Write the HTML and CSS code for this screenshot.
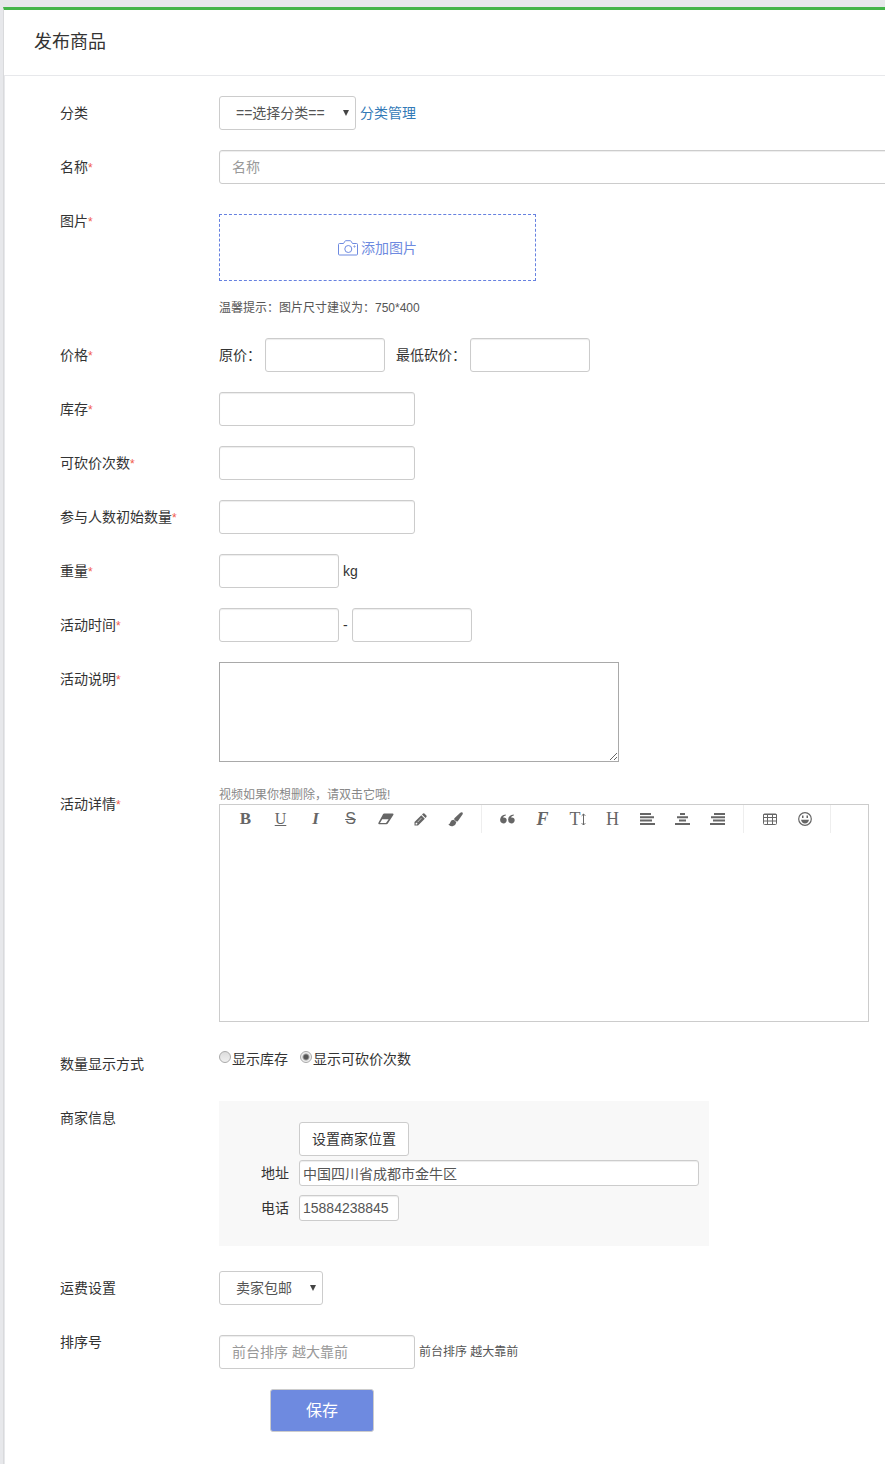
FILE: index.html
```html
<!DOCTYPE html>
<html lang="zh-CN">
<head>
    <meta charset="UTF-8">
    <meta name="viewport" content="width=device-width, initial-scale=1.0">
    <title>发布商品</title>
    <link rel="stylesheet" href="styles.css">
</head>
<body>
    <main class="panel">
        <h1 class="panel-heading">发布商品</h1>
        <form class="panel-body">
            <div class="form-row">
                <label class="row-label" for="category">分类</label>
                <div class="controls inline">
                    <span class="select-wrap">
                        <select id="category" class="select-category">
                            <option>==选择分类==</option>
                        </select>
                    </span>
                    <a class="link" href="#">分类管理</a>
                </div>
            </div>

            <div class="form-row">
                <label class="row-label" for="name">名称<i class="required">*</i></label>
                <div class="controls">
                    <input type="text" id="name" class="input input-wide" placeholder="名称">
                </div>
            </div>

            <div class="form-row">
                <span class="row-label">图片<i class="required">*</i></span>
                <div class="controls upload">
                    <button type="button" class="upload-btn">
                        <svg width="20" height="16" viewBox="0 0 20 16" fill="none" stroke="currentColor">
                            <path d="M1.5 3.5H5.5L7 1.2Q7.2 .7 7.8 .7H12.2Q12.8 .7 13 1.2L14.5 3.5H18.5Q19.5 3.5 19.5 4.5V14Q19.5 15 18.5 15H1.5Q.5 15 .5 14V4.5Q.5 3.5 1.5 3.5Z"/>
                            <circle cx="10.3" cy="9" r="3.5"/>
                            <circle cx="16.5" cy="6.5" r=".6"/>
                        </svg>
                        添加图片
                    </button>
                    <p class="tip">温馨提示：图片尺寸建议为：750*400</p>
                </div>
            </div>

            <div class="form-row">
                <span class="row-label">价格<i class="required">*</i></span>
                <div class="controls inline">
                    <label for="price">原价：</label>
                    <input type="text" id="price" class="input input-sm">
                    <label class="second" for="min-price">最低砍价：</label>
                    <input type="text" id="min-price" class="input input-sm">
                </div>
            </div>

            <div class="form-row">
                <label class="row-label" for="stock">库存<i class="required">*</i></label>
                <div class="controls">
                    <input type="text" id="stock" class="input">
                </div>
            </div>

            <div class="form-row">
                <label class="row-label" for="bargain-times">可砍价次数<i class="required">*</i></label>
                <div class="controls">
                    <input type="text" id="bargain-times" class="input">
                </div>
            </div>

            <div class="form-row">
                <label class="row-label" for="join-count">参与人数初始数量<i class="required">*</i></label>
                <div class="controls">
                    <input type="text" id="join-count" class="input">
                </div>
            </div>

            <div class="form-row">
                <label class="row-label" for="weight">重量<i class="required">*</i></label>
                <div class="controls inline">
                    <input type="text" id="weight" class="input input-sm">
                    <span>kg</span>
                </div>
            </div>

            <div class="form-row">
                <label class="row-label" for="start-time">活动时间<i class="required">*</i></label>
                <div class="controls inline">
                    <input type="text" id="start-time" class="input input-sm">
                    <span>-</span>
                    <input type="text" id="end-time" class="input input-sm" aria-label="结束时间">
                </div>
            </div>

            <div class="form-row form-row-tall">
                <label class="row-label" for="description">活动说明<i class="required">*</i></label>
                <div class="controls">
                    <textarea id="description" class="textarea"></textarea>
                </div>
            </div>

            <div class="form-row form-row-tall">
                <span class="row-label">活动详情<i class="required">*</i></span>
                <div class="controls">
                    <p class="editor-tip">视频如果你想删除，请双击它哦!</p>
                    <div class="editor">
                        <div class="toolbar">
                            <div class="tool-group">
                                <button type="button" class="tool bold">B</button>
                                <button type="button" class="tool underline">U</button>
                                <button type="button" class="tool italic">I</button>
                                <button type="button" class="tool strike">S</button>
                                <button type="button" class="tool" aria-label="清除格式">
                                    <svg width="16" height="12" viewBox="0 0 16 12">
                                        <path d="M6.2 .5H14.6Q16 .7 15.3 2L9.8 10.5Q9.3 11.3 8.4 11.3H1.2Q-.2 11 .6 9.6L5 1.3Q5.4 .5 6.2 .5ZM2 10H8L10.6 6.3H4.2Z" fill="currentColor" fill-rule="evenodd"/>
                                    </svg>
                                </button>
                                <button type="button" class="tool" aria-label="文字颜色">
                                    <svg width="13" height="13" viewBox="0 0 13 13" fill="currentColor">
                                        <path d="M.5 12.5V9L7.3 2.2L10.8 5.7L4 12.5ZM1.6 10.2V11.4H2.8L3.6 10.7L2.3 9.4ZM3.4 8.9L3.8 9.3L7.6 5.3L7.2 4.9Z" fill-rule="evenodd"/>
                                        <path d="M8 1.5L9 .6Q9.7 0 10.4 .6L12.4 2.6Q13 3.3 12.4 4L11.5 5Z"/>
                                    </svg>
                                </button>
                                <button type="button" class="tool" aria-label="背景颜色">
                                    <svg width="15" height="15" viewBox="0 0 15 15" fill="currentColor">
                                        <path d="M14.5 .6Q15.2 1.4 14.3 2.8L9.8 9.2Q8.7 10 7.5 8.8Q5.6 7.6 6.4 6.3L12 .9Q13.7-.3 14.5 .6Z"/>
                                        <path d="M5.3 7.8Q7.6 8.4 8.3 10.4Q7.8 13.3 4.6 14.2Q2 14.8 .3 12.1Q2 12.3 2.2 10.5Q2.9 7.8 5.3 7.8Z"/>
                                    </svg>
                                </button>
                            </div>
                            <div class="tool-group">
                                <button type="button" class="tool" aria-label="引用">
                                    <svg width="15" height="10" viewBox="0 0 15 10" fill="currentColor">
                                        <path id="quote" d="M5.8 .5V1.6Q3.3 2 3 3.6Q6.6 3.2 6.7 6.3Q6.5 9.4 3.4 9.5Q.1 9.3 .1 5.6Q.4 1.2 5.8 .5Z"/>
                                        <use href="#quote" x="8"/>
                                    </svg>
                                </button>
                                <button type="button" class="tool font">F</button>
                                <button type="button" class="tool size">T<svg width="5" height="13" viewBox="0 0 5 13" fill="none" stroke="currentColor"><path d="M2.5 1V12M.7 2.8L2.5 1L4.3 2.8M.7 10.2L2.5 12L4.3 10.2"/></svg></button>
                                <button type="button" class="tool">H</button>
                                <button type="button" class="tool" aria-label="左对齐">
                                    <svg width="15" height="12" viewBox="0 0 15 12" stroke="currentColor" stroke-width="2">
                                        <path d="M0 1H11M0 4.3H14M0 7.6H12M0 11H15"/>
                                    </svg>
                                </button>
                                <button type="button" class="tool" aria-label="居中">
                                    <svg width="15" height="12" viewBox="0 0 15 12" stroke="currentColor" stroke-width="2">
                                        <path d="M5 1H10M2 4.3H13M4 7.6H11M0 11H15"/>
                                    </svg>
                                </button>
                                <button type="button" class="tool" aria-label="右对齐">
                                    <svg width="15" height="12" viewBox="0 0 15 12" stroke="currentColor" stroke-width="2">
                                        <path d="M4 1H15M1 4.3H15M3 7.6H15M0 11H15"/>
                                    </svg>
                                </button>
                            </div>
                            <div class="tool-group">
                                <button type="button" class="tool" aria-label="表格">
                                    <svg width="14" height="12" viewBox="0 0 14 12" fill="none" stroke="currentColor">
                                        <rect x=".5" y="1" width="13" height="10.5" rx="1"/>
                                        <path d="M.5 1.5H13.5M.5 4.5H13.5M.5 8H13.5M4.5 1V11.5M9.5 1V11.5"/>
                                    </svg>
                                </button>
                                <button type="button" class="tool" aria-label="表情">
                                    <svg width="14" height="14" viewBox="0 0 14 14">
                                        <circle cx="7" cy="7" r="6.3" fill="none" stroke="currentColor" stroke-width="1.2"/>
                                        <path d="M3 7.8H11Q10.3 11.4 7 11.4Q3.7 11.4 3 7.8ZM4 3.6H5.5V6H4ZM8.5 3.6H10V6H8.5Z" fill="currentColor"/>
                                    </svg>
                                </button>
                            </div>
                        </div>
                        <div class="editor-content" contenteditable="true"></div>
                    </div>
                </div>
            </div>

            <div class="form-row">
                <span class="row-label">数量显示方式</span>
                <div class="controls radios">
                    <label class="radio"><input type="radio" name="show">显示库存</label>
                    <label class="radio"><input type="radio" name="show" checked>显示可砍价次数</label>
                </div>
            </div>

            <div class="form-row form-row-tall">
                <span class="row-label">商家信息</span>
                <div class="controls">
                    <div class="merchant">
                        <button type="button" class="btn">设置商家位置</button>
                        <div class="merchant-row">
                            <label for="address">地址</label>
                            <input type="text" id="address" class="input input-slim" value="中国四川省成都市金牛区">
                        </div>
                        <div class="merchant-row">
                            <label for="phone">电话</label>
                            <input type="text" id="phone" class="input input-slim input-phone" value="15884238845">
                        </div>
                    </div>
                </div>
            </div>

            <div class="form-row">
                <label class="row-label" for="freight">运费设置</label>
                <div class="controls">
                    <span class="select-wrap">
                        <select id="freight" class="select-freight">
                            <option>卖家包邮</option>
                        </select>
                    </span>
                </div>
            </div>

            <div class="form-row">
                <label class="row-label" for="sort">排序号</label>
                <div class="controls inline sort">
                    <input type="text" id="sort" class="input" placeholder="前台排序 越大靠前">
                    <span class="note">前台排序 越大靠前</span>
                </div>
            </div>

            <button type="submit" class="btn-save">保存</button>
        </form>
    </main>
</body>
</html>
```

FILE: styles.css
```css
* {
    box-sizing: border-box;
}
body {
    margin: 0;
    padding: 7px 0 0 3px;
    min-height: 100vh;
    display: flex;
    flex-direction: column;
    background-color: #e7e8eb;
    color: #333;
    font: 14px/20px "Liberation Sans", "Noto Sans CJK SC", sans-serif;
}
button, input, select, textarea {
    font: inherit;
    color: inherit;
}
p {
    margin: 0;
}
.panel {
    flex: 1;
    display: flex;
    flex-direction: column;
    background-color: #fff;
    border-top: 3px solid #44b549;
    border-left: 1px solid #d9dadc;
    overflow: hidden;
}
.panel-heading {
    margin: 0;
    padding: 20px 30px;
    font-size: 18px;
    line-height: 25px;
    font-weight: normal;
    border-bottom: 1px solid #e7e8eb;
}
.panel-body {
    flex: 1;
    padding: 20px 0 32px 55px;
    border-left: 1px solid #e7e8eb;
}

/* Form rows */
.form-row {
    display: flex;
    margin-bottom: 20px;
}
.form-row-tall {
    margin-bottom: 25px;
}
.row-label {
    flex: none;
    width: 159px;
    line-height: 34px;
}
.required {
    color: #f15a4c;
    font-size: 12px;
    line-height: 12px;
    font-style: normal;
}
.controls {
    flex: 1;
    min-width: 0;
}
.inline {
    display: flex;
    align-items: center;
    gap: 4px;
}
.second {
    margin-left: 7px;
}
.input {
    display: block;
    width: 196px;
    height: 34px;
    padding: 6px 12px;
    color: #555;
    background-color: #fff;
    border: 1px solid #ccc;
    border-radius: 3px;
    box-shadow: inset 0 1px 1px rgba(0, 0, 0, 0.075);
}
.input::placeholder {
    color: #999;
}
.input-wide {
    width: 110%;
}
.input-sm {
    width: 120px;
}
.link {
    color: #337ab7;
    text-decoration: none;
}
.select-wrap {
    position: relative;
    display: inline-block;
    vertical-align: top;
}
.select-wrap::after {
    content: "";
    position: absolute;
    top: 14px;
    right: 7px;
    border: 3px solid transparent;
    border-top: 6px solid #444;
    border-bottom: 0;
    pointer-events: none;
}
select {
    appearance: none;
    display: block;
    height: 34px;
    padding: 6px 16px;
    color: #555;
    background-color: #fff;
    border: 1px solid #ccc;
    border-radius: 3px;
}
.select-category {
    width: 137px;
}
.select-freight {
    width: 104px;
}

/* Picture upload */
.upload {
    padding-top: 10px;
}
.upload-btn {
    display: flex;
    align-items: center;
    justify-content: center;
    gap: 3px;
    width: 317px;
    height: 67px;
    color: #6e8ae0;
    background: none;
    border: 1px dashed #6681e0;
}
.tip {
    margin-top: 17px;
    font-size: 12px;
    color: #555;
}

/* Rich text editor */
.textarea {
    display: block;
    width: 400px;
    height: 100px;
    border: 1px solid #a9a9a9;
}
.editor-tip {
    font-size: 12px;
    line-height: 17px;
    color: #888;
}
.editor {
    max-width: 650px;
    height: 218px;
    margin-right: 16px;
    border: 1px solid #ccc;
}
.toolbar {
    display: flex;
}
.tool-group {
    display: flex;
    padding: 0 8px;
    border-right: 1px solid #eee;
}
.tool {
    display: flex;
    align-items: center;
    justify-content: center;
    width: 35px;
    height: 28px;
    padding: 0;
    color: #666;
    background: none;
    border: 0;
    font-family: "Liberation Serif", serif;
    font-size: 18px;
}
.bold {
    font-size: 17px;
    font-weight: bold;
}
.underline {
    font-size: 16px;
    text-decoration: underline;
}
.italic {
    font-size: 17px;
    font-weight: bold;
    font-style: italic;
}
.strike {
    font-family: "Liberation Sans", sans-serif;
    font-size: 16px;
    text-decoration: line-through;
}
.font {
    font-weight: bold;
    font-style: italic;
}
.editor-content {
    height: 188px;
}

.radios {
    display: flex;
    gap: 12px;
    line-height: 24px;
}
.radio {
    display: flex;
    gap: 1px;
}
.radio input {
    appearance: none;
    width: 12px;
    height: 12px;
    margin: 4px 0 0;
    border: 1px solid #aaa;
    border-radius: 50%;
    background: linear-gradient(#ddd, #f0f0f0);
}
.radio input:checked {
    background: radial-gradient(circle, #555 2px, #eee 4px);
}

/* Merchant info */
.merchant {
    max-width: 490px;
    padding: 21px 10px 25px 0;
    background-color: #f8f8f8;
}
.btn {
    display: block;
    height: 34px;
    margin: 0 0 4px 80px;
    padding: 6px 12px;
    background-color: #fff;
    border: 1px solid #ccc;
    border-radius: 3px;
}
.merchant-row {
    display: flex;
    align-items: center;
    gap: 10px;
}
.merchant-row + .merchant-row {
    margin-top: 9px;
}
.merchant-row label {
    width: 70px;
    text-align: right;
}
.input-slim {
    flex: 1;
    height: 26px;
    padding: 2px 3px;
}
.input-phone {
    flex: none;
    width: 100px;
}

.sort {
    padding-top: 10px;
}
.note {
    font-size: 12px;
    color: #555;
}
.btn-save {
    display: block;
    width: 104px;
    height: 43px;
    margin-left: 210px;
    color: #fff;
    background-color: #6e8ae0;
    border: 1px solid #ccc;
    border-radius: 3px;
    font-size: 16px;
}
```
